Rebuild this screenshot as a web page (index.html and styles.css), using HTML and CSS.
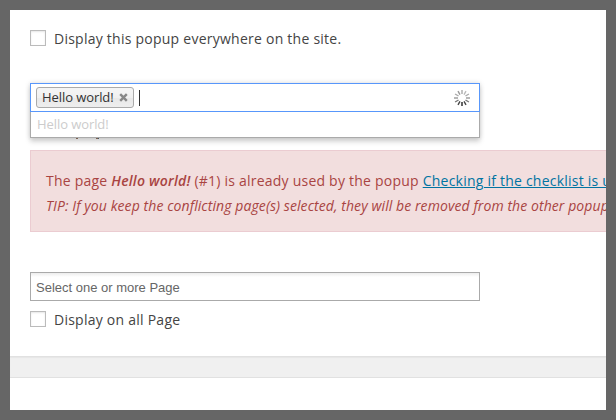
FILE: index.html
```html
<!DOCTYPE html>
<html lang="en">
<head>
<meta charset="utf-8">
<title>Popup display rules</title>
<link rel="stylesheet" href="styles.css">
</head>
<body>
<main class="frame">
  <section class="panel">
    <div class="check"><span class="box"></span><span>Display this popup everywhere on the site.</span></div>
    <div class="select">
      <div class="field">
        <span class="chip"><span class="chip-text">Hello world!</span><svg class="remove" viewBox="0 0 9 9"><path d="M1.2 1.2 7.8 7.8M7.8 1.2 1.2 7.8"/></svg></span>
        <span class="caret"></span>
        <svg class="spinner" viewBox="-8 -8 16 16">
          <g stroke-width="1.4">
            <path d="M0-4V-8" stroke="#aaa"/>
            <path d="M0-4V-8" stroke="#bbb" transform="rotate(30)"/>
            <path d="M0-4V-8" stroke="#aaa" transform="rotate(60)"/>
            <path d="M0-4V-8" stroke="#999" transform="rotate(90)"/>
            <path d="M0-4V-8" stroke="#777" transform="rotate(120)"/>
            <path d="M0-4V-8" stroke="#444" transform="rotate(150)"/>
            <path d="M0-4V-8" stroke="#222" transform="rotate(180)"/>
            <path d="M0-4V-8" stroke="#444" transform="rotate(210)"/>
            <path d="M0-4V-8" stroke="#777" transform="rotate(240)"/>
            <path d="M0-4V-8" stroke="#999" transform="rotate(270)"/>
            <path d="M0-4V-8" stroke="#aaa" transform="rotate(300)"/>
            <path d="M0-4V-8" stroke="#999" transform="rotate(330)"/>
          </g>
        </svg>
      </div>
      <div class="drop">Hello world!</div>
    </div>
    <div class="alert">
      <p class="message">The page <strong>Hello world!</strong> (#1) is already used by the popup <a>Checking if the checklist is used</a></p>
      <p class="tip">TIP: If you keep the conflicting page(s) selected, they will be removed from the other popups.</p>
    </div>
    <div class="input">Select one or more Page</div>
    <div class="check last"><span class="box"></span><span>Display on all Page</span></div>
  </section>
  <div class="gap"></div>
</main>
</body>
</html>
```
FILE: styles.css
```css
* { box-sizing: border-box; }
body { margin: 0; font: 14px/20px "Open Sans", sans-serif; color: #444; }
.frame { height: 420px; border: 10px solid #666; background: #fff; overflow: hidden; }
.panel { height: 346px; padding: 18px 0 0 20px; }
.check { display: flex; align-items: center; gap: 8px; height: 20px; letter-spacing: .245px; }
.check span + span { padding-top: 1px; }
.box { width: 16px; height: 16px; border: 1px solid #bbb; box-shadow: inset 0 1px 2px rgba(0,0,0,.1); }
.select { position: relative; width: 450px; margin-top: 35px; box-shadow: 0 0 5px rgba(0,0,0,.15), 0 4px 5px rgba(0,0,0,.15); font-size: 13px; letter-spacing: -.08px; }
/* descenders of the label that the open dropdown covers */
.select::after { content: ""; position: absolute; top: 100%; left: 46px; width: 2px; height: 1px; background: #7a6050; box-shadow: 20px 0 #7a6050, 21px 0 #445566; }
.field { height: 29px; display: flex; align-items: center; padding: 0 9px 0 5px; border: 1px solid #5897fb; background: #fff; }
.chip { width: 98px; height: 21px; display: flex; align-items: center; padding: 0 5px; border: 1px solid #aaa; border-radius: 3px; background: linear-gradient(#f4f4f4 20%, #f0f0f0 50%, #e8e8e8 52%, #eee); color: #333; line-height: 19px; white-space: nowrap; }
.chip-text { width: 77px; }
.remove { width: 9px; height: 9px; fill: none; stroke: #888; stroke-width: 2.4; }
.caret { width: 1px; height: 16px; margin-left: 5px; background: #333; }
.spinner { width: 16px; height: 16px; margin-left: auto; }
.drop { height: 26px; padding: 1px 6px 0; border: 1px solid #aaa; border-top: 0; background: #fff; color: #ccc; line-height: 22px; }
.alert { width: 620px; height: 82px; margin-top: 12px; padding: 17px 15px; border: 1px solid #ebccd1; background: #f2dede; color: #a94442; white-space: nowrap; }
.alert p { margin: 0; line-height: 25px; }
.message { letter-spacing: .225px; }
.message strong { font-style: italic; font-weight: 600; }
.message a { color: #0074a2; text-decoration: underline; }
.tip { font-style: italic; letter-spacing: .08px; }
.input { width: 450px; height: 29px; margin-top: 40px; padding: 0 5px; border: 1px solid #aaa; background: linear-gradient(#eee 1%, #fff 15%); color: #666; font: 13px/29px "Liberation Sans", sans-serif; }
.last { margin-top: 8px; }
.gap { height: 22px; border: 1px solid #e1e1e1; border-width: 1px 0; background: #f0f0f0; box-shadow: inset 0 1px 1px rgba(0,0,0,.04); }
```
